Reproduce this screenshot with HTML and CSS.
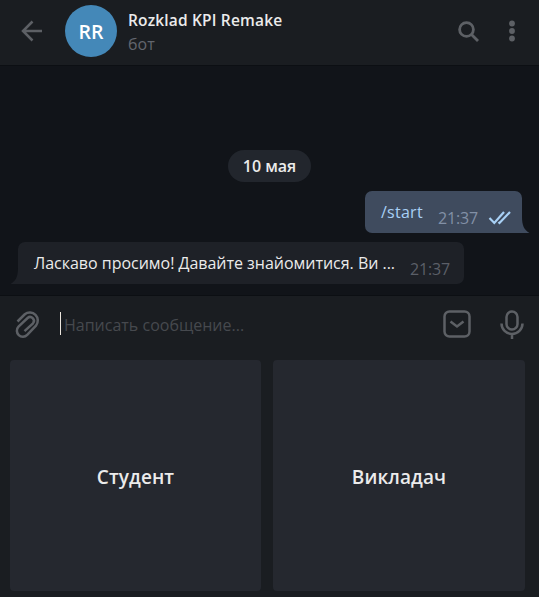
FILE: index.html
```html
<!DOCTYPE html>
<html lang="ru">
<head>
<meta charset="utf-8">
<title>Rozklad KPI Remake</title>
<link rel="stylesheet" href="styles.css">
</head>
<body>
<header class="topbar">
  <svg class="back" width="22" height="22" viewBox="0 0 22 22"><path d="M21 11H2M11.500 1.500L2 11l9.500 9.500"/></svg>
  <div class="avatar">RR</div>
  <div class="peer">
    <div class="name">Rozklad KPI Remake</div>
    <div class="status">бот</div>
  </div>
  <svg class="search" width="22" height="22" viewBox="0 0 22 22"><circle cx="8.500" cy="8.500" r="6.900"/><path d="M13.500 13.500l6.500 6.500"/></svg>
  <svg class="dots" width="6" height="22" viewBox="0 0 6 22"><circle cx="3" cy="3.500" r="2.900"/><circle cx="3" cy="11" r="2.900"/><circle cx="3" cy="18.500" r="2.900"/></svg>
</header>
<main class="history">
  <div class="date">10 мая</div>
  <div class="bubble out">
    <span class="text">/start</span>
    <span class="time">21:37</span>
    <svg class="checks" width="24" height="16" viewBox="0 0 24 16"><path d="M1.500 8l4.800 5L16 2M10.500 12l1 1L22 2"/></svg>
    <svg class="tail" width="8" height="16" viewBox="0 0 8 16"><path d="M0 0C0 8 2 13 7.500 16H0z"/></svg>
  </div>
  <div class="bubble in">
    <svg class="tail" width="8" height="16" viewBox="0 0 8 16"><path d="M8 0C8 8 6 13 .5 16H8z"/></svg>
    <span class="text">Ласкаво просимо! Давайте знайомитися. Ви ...</span>
    <span class="time">21:37</span>
  </div>
</main>
<footer class="panel">
  <div class="compose">
    <svg class="clip" width="26" height="29" viewBox="0 0 26 29"><path d="M2.500 11.500L9.800 4.300A8 8 0 0 1 21 15.600L12.200 24.800A5.800 5.800 0 0 1 3.500 16.600L12.600 8A3.800 3.800 0 0 1 18 13.300L9.500 21.200"/></svg>
    <div class="field">Написать сообщение...</div>
    <svg class="keyboard" width="28" height="28" viewBox="0 0 28 28"><rect x="1.500" y="1.500" width="25" height="25" rx="5"/><path d="M7.500 11.500l6.500 5 6.500-5"/></svg>
    <svg class="mic" width="24" height="29" viewBox="0 0 24 29"><rect x="6.500" y="1.500" width="11" height="18" rx="5.500"/><path d="M1.500 13.500a10.500 10.500 0 0 0 21 0M12 24v5"/></svg>
  </div>
  <div class="replies">
    <div class="reply">Студент</div>
    <div class="reply">Викладач</div>
  </div>
</footer>
</body>
</html>
```

FILE: styles.css
```css
* { box-sizing: border-box; }
body {
  margin: 0;
  width: 539px;
  height: 597px;
  overflow: hidden;
  display: flex;
  flex-direction: column;
  background: #111419;
  font: 16px/24px "Open Sans", "Noto Sans", sans-serif;
  color: #ebebeb;
}
svg { display: block; flex: none; fill: none; stroke: #5d6065; stroke-width: 2.5; }
.avatar, .name, .date, .reply { font-weight: 600; }
.topbar {
  height: 66px;
  flex: none;
  display: flex;
  align-items: flex-start;
  background: #1a1d21;
  border-bottom: 1px solid #0c0f13;
}
.back { margin: 20px 0 0 21px; }
.avatar {
  width: 52px;
  height: 52px;
  margin: 5px 11px 0 22px;
  border-radius: 50%;
  background: #4488b8;
  color: #fff;
  font-size: 19.500px;
  line-height: 54px;
  text-align: center;
}
.peer { flex: 1; margin-top: 8px; }
.name { font-size: 15.500px; letter-spacing: 0.170px; white-space: nowrap; }
.status { color: #62666e; }
.search { margin: 21px 0 0; stroke-width: 2.800; }
.dots { margin: 20px 24px 0 29px; fill: #5d6065; stroke: none; }
.history {
  height: 229px;
  flex: none;
  display: flex;
  flex-direction: column;
  padding: 84px 17px 0 18px;
}
.date {
  align-self: center;
  width: 83px;
  height: 32px;
  margin-right: 1px;
  border-radius: 16px;
  background: #22262d;
  line-height: 32px;
  text-align: center;
}
.bubble {
  position: relative;
  height: 42px;
  display: flex;
  margin-top: 9px;
  padding: 9px 0 0 16px;
  white-space: nowrap;
}
.time { margin-top: 6px; color: #5b5f67; letter-spacing: -0.150px; }
.out {
  align-self: flex-end;
  width: 157px;
  border-radius: 7px 7px 0 7px;
  background: #3f4b5e;
  color: #a8d0f5;
}
.out .text { width: 57px; letter-spacing: 0.250px; }
.out .time { width: 50px; color: #8290a6; }
.in {
  width: 446px;
  border-radius: 7px 7px 7px 0;
  background: #1e2127;
}
.in .text { width: 376px; letter-spacing: -0.020px; }
.checks { margin-top: 10px; stroke: #a8d0f5; stroke-width: 2.200; }
.tail { position: absolute; bottom: 0; stroke: none; }
.out .tail { left: 100%; fill: #3f4b5e; }
.in .tail { right: 100%; fill: #1e2127; }
.panel { flex: 1; background: #1a1d21; border-top: 1px solid #0c0f13; }
.compose { height: 64px; display: flex; align-items: flex-start; }
.clip { margin: 14px 0 0 15px; }
.field {
  flex: 1;
  height: 23px;
  margin: 16px 0 0 19px;
  padding-left: 3px;
  border-left: 1px solid #ebe5dd;
  color: #46494e;
  line-height: 26px;
}
.keyboard { margin-top: 14px; }
.mic { margin: 14px 15px 0 29px; }
.replies { display: grid; grid-template-columns: 251px 252px; gap: 12px; padding-left: 10px; }
.reply {
  height: 231px;
  border-radius: 4px;
  background: #25282f;
  font-size: 19px;
  letter-spacing: 0.100px;
  line-height: 234px;
  text-align: center;
}
```
